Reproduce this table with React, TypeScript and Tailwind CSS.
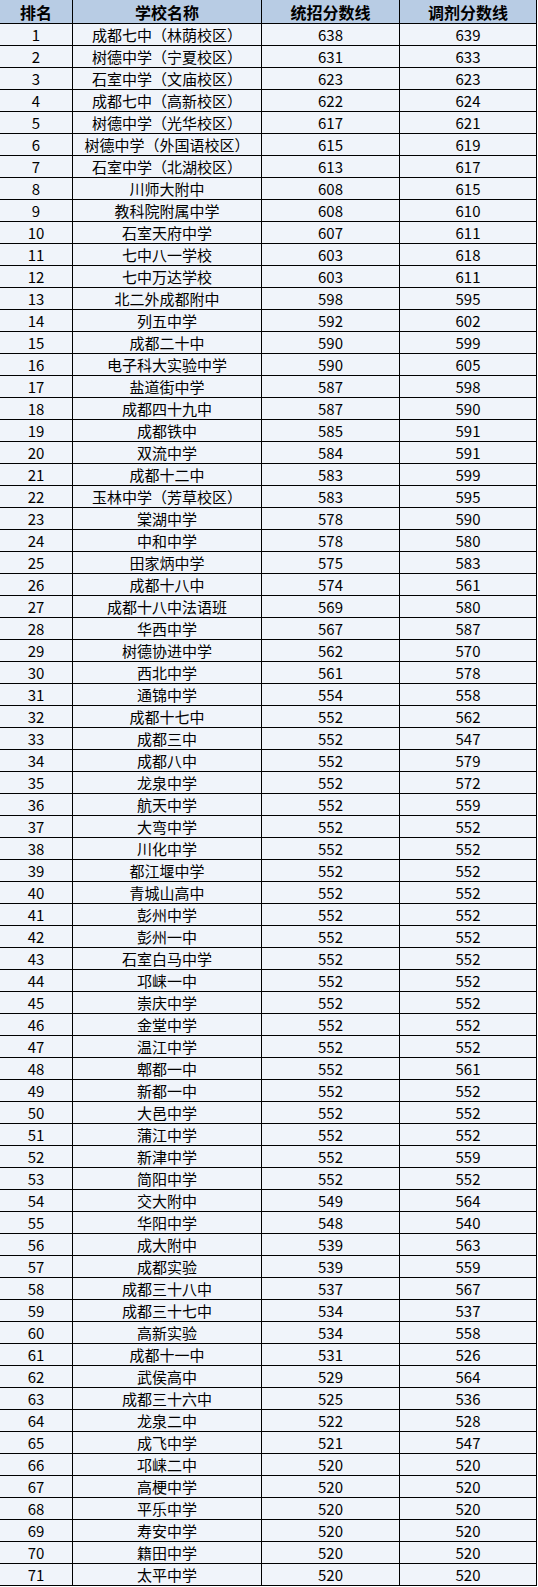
import * as React from "react";

type Row = [string, number, number];

const ROWS: Row[] = [
  ["成都七中（林荫校区）", 638, 639],
  ["树德中学（宁夏校区）", 631, 633],
  ["石室中学（文庙校区）", 623, 623],
  ["成都七中（高新校区）", 622, 624],
  ["树德中学（光华校区）", 617, 621],
  ["树德中学（外国语校区）", 615, 619],
  ["石室中学（北湖校区）", 613, 617],
  ["川师大附中", 608, 615],
  ["教科院附属中学", 608, 610],
  ["石室天府中学", 607, 611],
  ["七中八一学校", 603, 618],
  ["七中万达学校", 603, 611],
  ["北二外成都附中", 598, 595],
  ["列五中学", 592, 602],
  ["成都二十中", 590, 599],
  ["电子科大实验中学", 590, 605],
  ["盐道街中学", 587, 598],
  ["成都四十九中", 587, 590],
  ["成都铁中", 585, 591],
  ["双流中学", 584, 591],
  ["成都十二中", 583, 599],
  ["玉林中学（芳草校区）", 583, 595],
  ["棠湖中学", 578, 590],
  ["中和中学", 578, 580],
  ["田家炳中学", 575, 583],
  ["成都十八中", 574, 561],
  ["成都十八中法语班", 569, 580],
  ["华西中学", 567, 587],
  ["树德协进中学", 562, 570],
  ["西北中学", 561, 578],
  ["通锦中学", 554, 558],
  ["成都十七中", 552, 562],
  ["成都三中", 552, 547],
  ["成都八中", 552, 579],
  ["龙泉中学", 552, 572],
  ["航天中学", 552, 559],
  ["大弯中学", 552, 552],
  ["川化中学", 552, 552],
  ["都江堰中学", 552, 552],
  ["青城山高中", 552, 552],
  ["彭州中学", 552, 552],
  ["彭州一中", 552, 552],
  ["石室白马中学", 552, 552],
  ["邛崃一中", 552, 552],
  ["崇庆中学", 552, 552],
  ["金堂中学", 552, 552],
  ["温江中学", 552, 552],
  ["郫都一中", 552, 561],
  ["新都一中", 552, 552],
  ["大邑中学", 552, 552],
  ["蒲江中学", 552, 552],
  ["新津中学", 552, 559],
  ["简阳中学", 552, 552],
  ["交大附中", 549, 564],
  ["华阳中学", 548, 540],
  ["成大附中", 539, 563],
  ["成都实验", 539, 559],
  ["成都三十八中", 537, 567],
  ["成都三十七中", 534, 537],
  ["高新实验", 534, 558],
  ["成都十一中", 531, 526],
  ["武侯高中", 529, 564],
  ["成都三十六中", 525, 536],
  ["龙泉二中", 522, 528],
  ["成飞中学", 521, 547],
  ["邛崃二中", 520, 520],
  ["高梗中学", 520, 520],
  ["平乐中学", 520, 520],
  ["寿安中学", 520, 520],
  ["籍田中学", 520, 520],
  ["太平中学", 520, 520],
];

const cell =
  "flex items-center justify-center border-r border-b border-black leading-none";

export default function App() {
  return (
    <div
      className="w-[538px] bg-white text-[15px] text-black"
      style={{ fontFamily: '"Noto Sans CJK SC", "Noto Sans", sans-serif' }}
    >
      <div className="grid w-[537px] grid-cols-[73px_189px_138px_137px]">
        <div className={`${cell} h-[24px] bg-[#b8cce4] text-[16px] font-bold`}>排名</div>
        <div className={`${cell} h-[24px] bg-[#b8cce4] text-[16px] font-bold`}>学校名称</div>
        <div className={`${cell} h-[24px] bg-[#b8cce4] text-[16px] font-bold`}>统招分数线</div>
        <div className={`${cell} h-[24px] bg-[#b8cce4] text-[16px] font-bold`}>调剂分数线</div>

        {ROWS.map(([name, a, b], i) => (
          <React.Fragment key={i}>
            <div className={`${cell} h-[22px] bg-[#f0f4fa]`}>{i + 1}</div>
            <div className={`${cell} h-[22px] bg-[#f0f4fa]`}>{name}</div>
            <div className={`${cell} h-[22px] bg-[#f0f4fa]`}>{a}</div>
            <div className={`${cell} h-[22px] bg-[#f0f4fa]`}>{b}</div>
          </React.Fragment>
        ))}
      </div>
    </div>
  );
}
